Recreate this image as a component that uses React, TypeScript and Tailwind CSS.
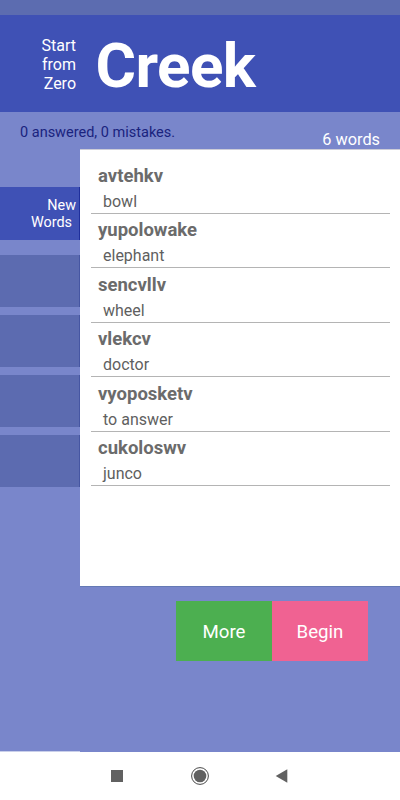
import React from 'react';

type Word = {
  term: string;
  meaning: string;
};

const words: Word[] = [
  { term: 'avtehkv', meaning: 'bowl' },
  { term: 'yupolowake', meaning: 'elephant' },
  { term: 'sencvllv', meaning: 'wheel' },
  { term: 'vlekcv', meaning: 'doctor' },
  { term: 'vyoposketv', meaning: 'to answer' },
  { term: 'cukoloswv', meaning: 'junco' },
];

const emptySlots = [0, 1, 2, 3];

function Header() {
  return (
    <header className="flex h-[97px] bg-[#3f51b5] text-white">
      <div className="w-[76px] pt-[21px] text-right text-[16px] leading-[19px]">
        Start
        <br />
        from
        <br />
        Zero
      </div>
      <h1 className="ml-[19.5px] pt-[13px] text-[62px] leading-[75px] font-bold tracking-[-0.6px]">Creek</h1>
    </header>
  );
}

function Sidebar() {
  return (
    <nav className="w-20 shrink-0 pt-[38px]">
      <div className="h-[52.5px] border-r border-[#1f2f9c] bg-[#3f51b5] pt-[10px] pr-[3px] text-right text-[14.4px] leading-[17px] text-white">
        New
        <br />
        <span className="mr-1">Words</span>
      </div>
      <div className="mt-[15px] flex flex-col gap-[7.5px]">
        {emptySlots.map((slot) => (
          <div key={slot} className="h-[52.5px] border-r border-[#4656a2] bg-[#5c6bb0]" />
        ))}
      </div>
    </nav>
  );
}

function WordList() {
  return (
    <ul className="h-[438px] flex-1 border-t border-b border-t-[#cdcdd8] border-b-[#6479b4] bg-white pt-[9.4px] pr-[10px] pl-[11px]">
      {words.map((word) => (
        <li key={word.term} className="h-[54.5px] border-b border-[#b4b4b4] pt-[5.6px]">
          <div className="pl-[7px] text-[18.5px] leading-[22px] font-bold text-[#6b6b6b]">{word.term}</div>
          <div className="pt-[5px] pl-[12px] text-[16px] leading-[19px] text-[#5f5f5f]">{word.meaning}</div>
        </li>
      ))}
    </ul>
  );
}

function NavBar() {
  return (
    <footer className="flex h-12 justify-center bg-white">
      <svg width="200" height="48" viewBox="0 0 200 48" fill="#616161">
        <rect x="11" y="18" width="12" height="12" />
        <circle cx="100" cy="24" r="8.4" fill="none" stroke="#4a4a4a" strokeWidth="1" />
        <circle cx="100" cy="24" r="6.3" />
        <path d="M175.7 24 187.3 17.3v13.4z" />
      </svg>
    </footer>
  );
}

export default function App() {
  return (
    <div className="flex h-[800px] w-[400px] flex-col overflow-hidden bg-[#7986cb] font-['Roboto',sans-serif]">
      <div className="h-[15px] shrink-0 bg-[#5c6cb0]" />
      <Header />
      <div className="flex h-[37px] justify-between pr-5 pl-5">
        <p className="pt-[12px] text-[14.5px] leading-[18px] text-[#1a237e]">0 answered, 0 mistakes.</p>
        <p className="pt-[18px] text-[16.3px] leading-[19px] text-white">6 words</p>
      </div>
      <main className="flex">
        <Sidebar />
        <WordList />
      </main>
      <div className="flex flex-1 justify-end pt-[14px] pr-8 text-[18.67px] text-white">
        <button type="button" className="h-[60px] w-24 bg-[#4caf50] pt-[2px]">
          More
        </button>
        <button type="button" className="h-[60px] w-24 bg-[#f06292] pt-[2px]">
          Begin
        </button>
      </div>
      <div className="h-px w-20 bg-[#c9cfea]" />
      <NavBar />
    </div>
  );
}
